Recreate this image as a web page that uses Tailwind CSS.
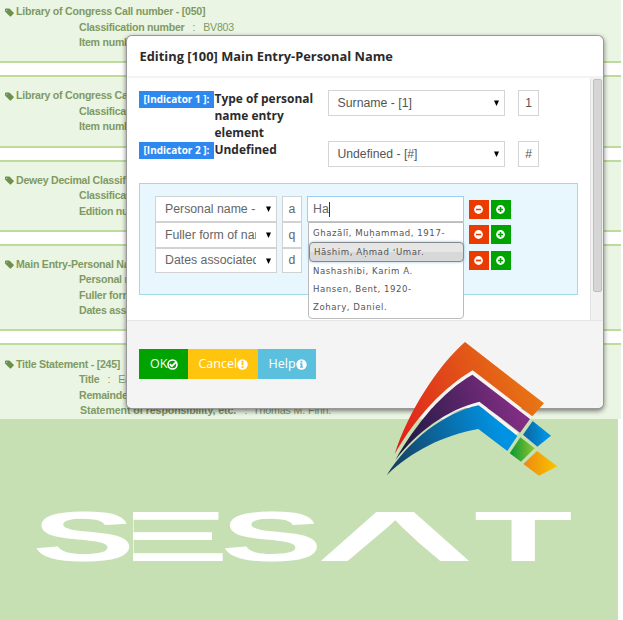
<!DOCTYPE html>
<html lang="en">
<head>
<meta charset="utf-8">
<title>SESAT</title>
<script src="https://cdn.jsdelivr.net/npm/@tailwindcss/browser@4"></script>
</head>
<body class="relative h-[620px] w-[623px] overflow-hidden bg-white font-['Liberation_Sans',Arial,sans-serif]">

<!-- Catalogue record behind the dialog -->
<main class="flex h-[419px] w-[621px] flex-col gap-[12px] overflow-hidden text-[10.6px] leading-[15.4px] font-bold tracking-[-0.25px] whitespace-nowrap text-[#7f9a63]">
  <section class="h-[63px] shrink-0 border-b-2 border-[#bddc9c] bg-[#ebf5e3] pt-[4.4px] pl-[5px]">
    <h2 class="flex items-center gap-[2px]"><svg class="size-[9px]" viewBox="0 0 9 9"><path fill="#6d8f50" fill-rule="evenodd" d="M0 1.3Q0 .5.8.5H4Q4.6.5 5 .9L8.7 4.7Q9.1 5.1 8.7 5.6L5.9 8.4Q5.4 8.8 5 8.4L.5 4Q0 3.6 0 3ZM1.3 2.2A.5.5 0 0 0 2.3 2.2A.5.5 0 0 0 1.3 2.2"/></svg>Library of Congress Call number - [050]</h2>
    <p class="pl-[74px]">Classification number<span class="font-normal"> &nbsp; : &nbsp; BV803</span></p>
    <p class="pl-[74px]">Item number</p>
  </section>
  <section class="h-[73px] shrink-0 border-y-2 border-[#bddc9c] bg-[#ebf5e3] pt-[11.4px] pl-[5px]">
    <h2 class="flex items-center gap-[2px]"><svg class="size-[9px]" viewBox="0 0 9 9"><path fill="#6d8f50" fill-rule="evenodd" d="M0 1.3Q0 .5.8.5H4Q4.6.5 5 .9L8.7 4.7Q9.1 5.1 8.7 5.6L5.9 8.4Q5.4 8.8 5 8.4L.5 4Q0 3.6 0 3ZM1.3 2.2A.5.5 0 0 0 2.3 2.2A.5.5 0 0 0 1.3 2.2"/></svg>Library of Congress Call number - [050]</h2>
    <p class="pl-[74px]">Classification number</p>
    <p class="pl-[74px]">Item number</p>
  </section>
  <section class="h-[72px] shrink-0 border-y-2 border-[#bddc9c] bg-[#ebf5e3] pt-[11px] pl-[5px]">
    <h2 class="flex items-center gap-[2px]"><svg class="size-[9px]" viewBox="0 0 9 9"><path fill="#6d8f50" fill-rule="evenodd" d="M0 1.3Q0 .5.8.5H4Q4.6.5 5 .9L8.7 4.7Q9.1 5.1 8.7 5.6L5.9 8.4Q5.4 8.8 5 8.4L.5 4Q0 3.6 0 3ZM1.3 2.2A.5.5 0 0 0 2.3 2.2A.5.5 0 0 0 1.3 2.2"/></svg>Dewey Decimal Classification</h2>
    <p class="pl-[74px]">Classification number</p>
    <p class="pl-[74px]">Edition number</p>
  </section>
  <section class="h-[87px] shrink-0 border-y-2 border-[#bddc9c] bg-[#ebf5e3] pt-[11px] pl-[5px]">
    <h2 class="flex items-center gap-[2px]"><svg class="size-[9px]" viewBox="0 0 9 9"><path fill="#6d8f50" fill-rule="evenodd" d="M0 1.3Q0 .5.8.5H4Q4.6.5 5 .9L8.7 4.7Q9.1 5.1 8.7 5.6L5.9 8.4Q5.4 8.8 5 8.4L.5 4Q0 3.6 0 3ZM1.3 2.2A.5.5 0 0 0 2.3 2.2A.5.5 0 0 0 1.3 2.2"/></svg>Main Entry-Personal Name</h2>
    <p class="pl-[74px]">Personal name</p>
    <p class="pl-[74px]">Fuller form of name</p>
    <p class="pl-[74px]">Dates associated</p>
  </section>
  <section class="h-[90px] shrink-0 border-t-2 border-[#bddc9c] bg-[#ebf5e3] pt-[11.8px] pl-[5px]">
    <h2 class="flex items-center gap-[2px]"><svg class="size-[9px]" viewBox="0 0 9 9"><path fill="#6d8f50" fill-rule="evenodd" d="M0 1.3Q0 .5.8.5H4Q4.6.5 5 .9L8.7 4.7Q9.1 5.1 8.7 5.6L5.9 8.4Q5.4 8.8 5 8.4L.5 4Q0 3.6 0 3ZM1.3 2.2A.5.5 0 0 0 2.3 2.2A.5.5 0 0 0 1.3 2.2"/></svg>Title Statement - [245]</h2>
    <p class="pl-[74px]">Title<span class="font-normal"> &nbsp; : &nbsp; Early</span></p>
    <p class="pl-[74px]">Remainder of title</p>
    <p class="pl-[75px] tracking-[-0.1px]">Statement of responsibility, etc.<span class="font-normal"> &nbsp; : &nbsp;Thomas M. Finn.</span></p>
  </section>
</main>

<!-- Brand band -->
<footer class="h-[201px] w-[618px] bg-[#c6e0b4]">
  <svg class="block h-[201px] w-[618px]" viewBox="0 419 618 201" font-family="Liberation Sans, Arial, sans-serif" font-weight="700" font-size="69.8" fill="#fff">
    <text transform="translate(88.5 561) scale(3.06 1)">E</text>
    <rect x="90" y="505" width="43" height="60" fill="#c6e0b4"/>
    <text transform="translate(32 561) scale(2.22 1)">S</text>
    <text transform="translate(220.5 561) scale(2.2 1)">S</text>
    <text transform="translate(315.4 561) scale(3.16 1)">A</text>
    <path fill="#c6e0b4" d="M394 522 441 561.5H347Z"/>
    <text transform="translate(473.9 561) scale(2.31 1)">T</text>
  </svg>
</footer>

<!-- Dialog -->
<div class="absolute top-[36px] left-[127px] flex h-[372px] w-[476px] flex-col overflow-hidden rounded-[5px] bg-white shadow-[0_0_0_1px_#999,0_2px_5px_1px_rgba(0,0,0,0.5)]">
  <h1 class="h-[42px] shrink-0 border-b-2 border-[#f3f3f3] pl-[12.5px] font-['Open_Sans',sans-serif] text-[12.85px] leading-[41px] font-bold whitespace-nowrap text-[#2b2b2b]">Editing [100] Main Entry-Personal Name</h1>
  <div class="flex h-[242px] shrink-0">
    <div class="w-[463px] pl-[12px]">
      <div class="flex h-[51px] items-start pt-[12px]">
        <span class="mt-[1px] h-[17px] w-[75px] bg-[#2d89ef] text-center font-['Open_Sans',sans-serif] text-[10px] leading-[17px] font-bold whitespace-nowrap text-white">[Indicator 1 ]:</span>
        <div class="h-[51px] w-[114px] pl-[0.5px] font-['Open_Sans',sans-serif] text-[11.95px] leading-[17px] font-bold whitespace-nowrap text-[#2b2b2b]">Type of personal<br>name entry<br>element</div>
        <div class="flex h-[26px] w-[177px] items-center justify-between border border-[#d5d5d5] pr-[5px] pl-[8.5px] text-[12.3px] text-[#555]">Surname - [1]<svg class="h-[6px] w-[5px]" viewBox="0 0 5 6"><path d="M0 .5H5L2.5 6Z"/></svg></div>
        <div class="ml-[13px] flex h-[26px] w-[21px] items-center justify-center border border-[#d5d5d5] text-[12px] text-[#555]">1</div>
      </div>
      <div class="flex h-[54px] items-start pt-[12px]">
        <span class="mt-[1px] h-[17px] w-[75px] bg-[#2d89ef] text-center font-['Open_Sans',sans-serif] text-[10px] leading-[17px] font-bold whitespace-nowrap text-white">[Indicator 2 ]:</span>
        <div class="w-[114px] pl-[0.5px] font-['Open_Sans',sans-serif] text-[11.95px] leading-[17px] font-bold text-[#2b2b2b]">Undefined</div>
        <div class="flex h-[26px] w-[177px] items-center justify-between border border-[#d5d5d5] pr-[5px] pl-[8.5px] text-[12.2px] text-[#555]">Undefined - [#]<svg class="h-[6px] w-[5px]" viewBox="0 0 5 6"><path d="M0 .5H5L2.5 6Z"/></svg></div>
        <div class="ml-[13px] flex h-[26px] w-[21px] items-center justify-center border border-[#d5d5d5] text-[12px] text-[#555]">#</div>
      </div>
      <div class="relative flex h-[112px] w-[439px] border border-[#9fdbe6] bg-[#e8f7fe] pt-[12px] pl-[15px] text-[12.3px] text-[#666]">
        <div class="flex h-[78px] w-[122px] flex-col whitespace-nowrap">
          <div class="flex h-[26px] items-center justify-between border border-[#d2d2d2] bg-white pr-[5px] pl-[9px]"><span class="w-[91px] overflow-hidden">Personal name -</span><svg class="h-[6px] w-[5px]" viewBox="0 0 5 6"><path d="M0 .5H5L2.5 6Z"/></svg></div>
          <div class="flex h-[26px] items-center justify-between border border-[#d2d2d2] bg-white pr-[5px] pl-[9px]"><span class="w-[91px] overflow-hidden">Fuller form of name</span><svg class="h-[6px] w-[5px]" viewBox="0 0 5 6"><path d="M0 .5H5L2.5 6Z"/></svg></div>
          <div class="flex h-[25px] items-center justify-between border border-[#d2d2d2] bg-white pr-[5px] pl-[9px]"><span class="w-[91px] overflow-hidden">Dates associated</span><svg class="h-[6px] w-[5px]" viewBox="0 0 5 6"><path d="M0 .5H5L2.5 6Z"/></svg></div>
        </div>
        <div class="ml-[5px] flex w-[20px] flex-col text-center">
          <div class="h-[26px] border border-[#d2d2d2] bg-white leading-[24px]">a</div>
          <div class="h-[26px] border border-[#d2d2d2] bg-white leading-[24px]">q</div>
          <div class="h-[25px] border border-[#d2d2d2] bg-white leading-[23px]">d</div>
        </div>
        <div class="ml-[5px] flex h-[26px] w-[157px] items-center border border-[#a0cdf3] bg-white pl-[5px]">Ha<span class="h-[15px] w-px bg-[#333]"></span></div>
        <div class="ml-[5px] grid h-[74px] grid-cols-[19.5px_19.5px] content-between gap-x-[2.5px] pt-[3.5px]">
          <span class="flex h-[19px] items-center justify-center bg-[#eb3c00]"><svg class="size-[9px]" viewBox="0 0 9 9"><circle cx="4.5" cy="4.5" r="4.4" fill="#fff"/><path stroke="#eb3c00" stroke-width="1.7" d="M2 4.5H7"/></svg></span>
          <span class="flex h-[19px] items-center justify-center bg-[#00a300]"><svg class="size-[9px]" viewBox="0 0 9 9"><circle cx="4.5" cy="4.5" r="4.4" fill="#fff"/><path stroke="#00a300" stroke-width="1.6" d="M2 4.5H7M4.5 2V7"/></svg></span>
          <span class="flex h-[19px] items-center justify-center bg-[#eb3c00]"><svg class="size-[9px]" viewBox="0 0 9 9"><circle cx="4.5" cy="4.5" r="4.4" fill="#fff"/><path stroke="#eb3c00" stroke-width="1.7" d="M2 4.5H7"/></svg></span>
          <span class="flex h-[19px] items-center justify-center bg-[#00a300]"><svg class="size-[9px]" viewBox="0 0 9 9"><circle cx="4.5" cy="4.5" r="4.4" fill="#fff"/><path stroke="#00a300" stroke-width="1.6" d="M2 4.5H7M4.5 2V7"/></svg></span>
          <span class="flex h-[19px] items-center justify-center bg-[#eb3c00]"><svg class="size-[9px]" viewBox="0 0 9 9"><circle cx="4.5" cy="4.5" r="4.4" fill="#fff"/><path stroke="#eb3c00" stroke-width="1.7" d="M2 4.5H7"/></svg></span>
          <span class="flex h-[19px] items-center justify-center bg-[#00a300]"><svg class="size-[9px]" viewBox="0 0 9 9"><circle cx="4.5" cy="4.5" r="4.4" fill="#fff"/><path stroke="#00a300" stroke-width="1.6" d="M2 4.5H7M4.5 2V7"/></svg></span>
        </div>
        <!-- Autocomplete menu -->
        <ul class="absolute top-[38px] left-[167.5px] h-[97px] w-[156px] rounded-b-[4px] border border-[#bbb] bg-white pt-[1px] font-['DejaVu_Sans',sans-serif] text-[8.6px] leading-[18px] tracking-[0.55px] whitespace-nowrap text-[#555]">
          <li class="h-[18px] pl-[4.5px]">Ghazālī, Muḥammad, 1917-</li>
          <li class="-mr-px h-[20px] rounded-[4px] border border-[#888] bg-linear-to-b from-[#e6e6e6] from-50% to-[#d8d8d8] to-50% pl-[4.5px] shadow-[0_0_3px_#8ebede]">Hāshim, Aḥmad ʻUmar.</li>
          <li class="h-[18px] pl-[4.5px]">Nashashibi, Karim A.</li>
          <li class="h-[18px] pl-[4.5px]">Hansen, Bent, 1920-</li>
          <li class="h-[18px] pl-[4.5px]">Zohary, Daniel.</li>
        </ul>
      </div>
    </div>
    <div class="w-[13px] border-l border-[#e3e3e3] bg-[#f1f1f1] pt-[1px] pl-[2px]"><div class="h-[213px] w-[9px] rounded-[2px] border border-[#bfbfbf] bg-[#d6d6d6]"></div></div>
  </div>
  <div class="flex h-[88px] shrink-0 border-t border-[#e6e6e6] bg-[#f4f4f4] pt-[28px] pl-[12px] font-['Open_Sans',sans-serif] text-[12.5px] whitespace-nowrap text-white">
    <div class="flex h-[30px] w-[49px] items-center bg-[#00a300] pl-[11px]">OK<svg class="size-[11px]" viewBox="0 0 11 11"><circle cx="5.5" cy="5.5" r="4.5" fill="none" stroke="#fff" stroke-width="1.6"/><path fill="none" stroke="#fff" stroke-width="1.8" d="M2.8 5.2 4.9 7.2 9 3.1"/></svg></div>
    <div class="flex h-[30px] w-[69.5px] items-center bg-[#ffc40d] pl-[10.5px]">Cancel<svg class="size-[11px]" viewBox="0 0 11 11"><circle cx="5.5" cy="5.5" r="5.2" fill="#fff"/><path stroke="#ffc40d" stroke-width="1.8" d="M5.5 1.8V6.3M5.5 7.3V9"/></svg></div>
    <div class="flex h-[30px] w-[58.5px] items-center bg-[#5bc0de] pl-[11px]">Help<svg class="size-[11px]" viewBox="0 0 11 11"><circle cx="5.5" cy="5.5" r="5.2" fill="#fff"/><path fill="#5bc0de" d="M4.6 1.8H6.4V3.4H4.6ZM4 4.3H6.4V7.6H7.1V8.8H4V7.6H4.6V5.5H4Z"/></svg></div>
  </div>
</div>

<!-- Arrow emblem -->
<svg class="absolute top-[330px] left-[370px] h-[160px] w-[253px]" viewBox="0 0 759 480">
  <defs>
    <linearGradient id="flame" gradientUnits="userSpaceOnUse" x1="75" y1="370" x2="520" y2="200"><stop stop-color="#e31b1b"/><stop offset=".5" stop-color="#e04b19"/><stop offset="1" stop-color="#e87814"/></linearGradient>
    <linearGradient id="plum" gradientUnits="userSpaceOnUse" x1="100" y1="350" x2="450" y2="230"><stop stop-color="#211943"/><stop offset="1" stop-color="#832e84"/></linearGradient>
    <linearGradient id="sea" gradientUnits="userSpaceOnUse" x1="50" y1="430" x2="400" y2="320"><stop stop-color="#173b58"/><stop offset="1" stop-color="#0093e4"/></linearGradient>
    <linearGradient id="sky"><stop offset=".1" stop-color="#0d6aa6"/><stop offset=".8" stop-color="#0091e0"/></linearGradient>
    <linearGradient id="leaf"><stop offset=".1" stop-color="#169b35"/><stop offset="1" stop-color="#8cc62d"/></linearGradient>
    <linearGradient id="sun"><stop stop-color="#ee8810"/><stop offset="1" stop-color="#fac400"/></linearGradient>
  </defs>
  <path fill="#f7f4f2" d="M150 262C190 205 250 150 308 121L486 261 473 270 307 134C250 165 195 215 165 262Z"/>
  <path fill="#f7f4f2" d="M210 256C250 235 290 220 328 215L445 308 438 315 326 226C290 233 250 245 220 262Z"/>
  <path fill="url(#flame)" d="M285 36 522 220 487 259 308 121C220 174 140 258 74 372 116 243 203 108 285 36Z"/>
  <path fill="url(#plum)" d="M307 134 480 267 450 308 328 215C230 240 142 304 76 390 137 282 220 183 307 134Z"/>
  <path fill="url(#sea)" d="M326 226 442 318 412 363 325 297C220 316 125 363 50 436 116 331 222 248 326 226Z"/>
  <path fill="url(#sky)" d="M488 273 543 317 502 350 459 314Z"/>
  <path fill="url(#leaf)" d="M451 322 494 355 453 395 419 370Z"/>
  <path fill="url(#sun)" d="M501 363 562 409 507 437 460 402Z"/>
</svg>
</body>
</html>
